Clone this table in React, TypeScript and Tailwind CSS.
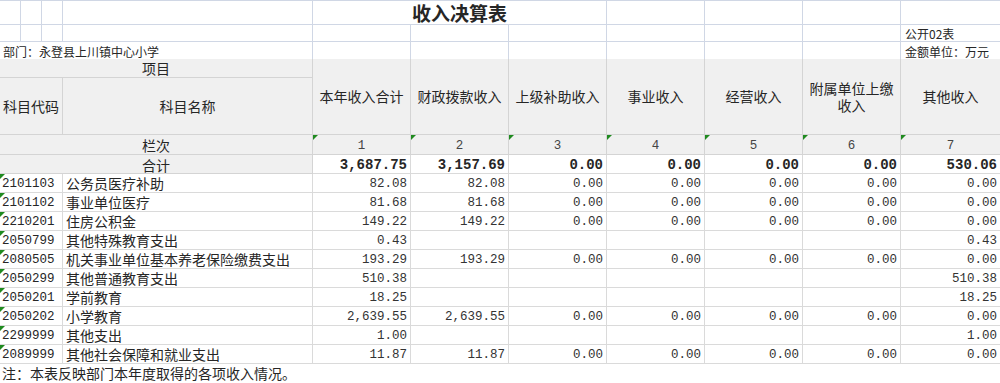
const CJK = "font-['Noto_Sans_CJK_SC',sans-serif]";
const MONO = "font-['Liberation_Mono',monospace]";

const HEAD_COLS = ['本年收入合计', '财政拨款收入', '上级补助收入', '事业收入', '经营收入', '附属单位上缴收入', '其他收入'];

const TOTALS = ['3,687.75', '3,157.69', '0.00', '0.00', '0.00', '0.00', '530.06'];

const ZERO5 = ['0.00', '0.00', '0.00', '0.00', '0.00'];

const ROWS: [string, string, string[]][] = [
  ['2101103', '公务员医疗补助', ['82.08', '82.08', ...ZERO5]],
  ['2101102', '事业单位医疗', ['81.68', '81.68', ...ZERO5]],
  ['2210201', '住房公积金', ['149.22', '149.22', ...ZERO5]],
  ['2050799', '其他特殊教育支出', ['0.43', '', '', '', '', '', '0.43']],
  ['2080505', '机关事业单位基本养老保险缴费支出', ['193.29', '193.29', ...ZERO5]],
  ['2050299', '其他普通教育支出', ['510.38', '', '', '', '', '', '510.38']],
  ['2050201', '学前教育', ['18.25', '', '', '', '', '', '18.25']],
  ['2050202', '小学教育', ['2,639.55', '2,639.55', ...ZERO5]],
  ['2299999', '其他支出', ['1.00', '', '', '', '', '', '1.00']],
  ['2089999', '其他社会保障和就业支出', ['11.87', '11.87', ...ZERO5]],
];

// little green "number stored as text" marker
const Flag = () => (
  <span className="absolute left-0 top-0 h-0 w-0 border-r-[5px] border-t-[5px] border-r-transparent border-t-[#1f8a1f]" />
);

const TOP = 'border-b border-r border-[#d0d7e5]';
const TOP_LAST = 'border-b border-[#d0d7e5]';
const HEAD = 'flex items-center justify-center bg-[#f0f0f0] border-b border-r border-[#d4d4d4] text-center';
const CELL = 'flex items-center justify-end pr-[3px] pt-[2px] border-b border-r border-[#dadada]';
const CELL_LAST = 'flex items-center justify-end pr-[3px] pt-[2px] border-b border-[#dadada]';

export default function App() {
  return (
    <div className={`h-[383px] w-[1000px] overflow-hidden bg-white text-[#262626] ${CJK}`}>
      <div className="grid grid-cols-[21px_21px_21px_250px_98px_98px_98px_98px_98px_98px_99px] grid-rows-[25px_17px_17px_19px_57px_20px_19px_19px_19px_19px_19px_19px_19px_19px_19px_19px_19px]">
        {/* row 1: title */}
        <div className={`${TOP} border-t`} />
        <div className={`${TOP} border-t`} />
        <div className={`${TOP} border-t`} />
        <div className={`${TOP} border-t`} />
        <div className={`${TOP} col-span-3 flex items-center justify-center border-t text-[19px] font-bold leading-none`}>
          收入决算表
        </div>
        <div className={`${TOP} border-t`} />
        <div className={`${TOP} border-t`} />
        <div className={`${TOP} border-t`} />
        <div className={`${TOP_LAST} border-t`} />

        {/* row 2 */}
        <div className={TOP} />
        <div className={TOP} />
        <div className={TOP} />
        <div className={TOP} />
        <div className={TOP} />
        <div className={TOP} />
        <div className={TOP} />
        <div className={TOP} />
        <div className={TOP} />
        <div className={TOP} />
        <div className={`${TOP_LAST} flex items-end pl-[4px] text-[12px] leading-[15px]`}>公开02表</div>

        {/* row 3 */}
        <div className="col-span-4 flex items-end border-r border-[#d0d7e5] pl-[3px] text-[12px] leading-[15px]">
          部门：永登县上川镇中心小学
        </div>
        <div className="border-r border-[#d0d7e5]" />
        <div className="border-r border-[#d0d7e5]" />
        <div className="border-r border-[#d0d7e5]" />
        <div className="border-r border-[#d0d7e5]" />
        <div className="border-r border-[#d0d7e5]" />
        <div className="border-r border-[#d0d7e5]" />
        <div className="flex items-end pl-[4px] text-[12px] leading-[15px]">金额单位：万元</div>

        {/* header */}
        <div className={`${HEAD} col-span-4 text-[14px]`}>项目</div>
        {HEAD_COLS.map((label, i) => (
          <div
            key={label}
            className={
              i === 6
                ? 'row-span-2 flex items-center justify-center bg-[#f0f0f0] border-b border-[#d4d4d4] px-1 text-center text-[14px]'
                : 'row-span-2 flex items-center justify-center bg-[#f0f0f0] border-b border-r border-[#d4d4d4] px-1 text-center text-[14px]'
            }
          >
            {label === '附属单位上缴收入' ? (
              <div className="flex flex-col items-center leading-[17px]">
                <span>附属单位上缴</span>
                <span>收入</span>
              </div>
            ) : (
              label
            )}
          </div>
        ))}
        <div className={`${HEAD} col-span-3 text-[14px]`}>科目代码</div>
        <div className={`${HEAD} text-[14px]`}>科目名称</div>

        {/* 栏次 */}
        <div className={`${HEAD} col-span-4 pt-[2px] text-[14px]`}>栏次</div>
        {[1, 2, 3, 4, 5, 6, 7].map((n) => (
          <div
            key={n}
            className={`${n === 7 ? 'border-b border-[#d4d4d4]' : 'border-b border-r border-[#d4d4d4]'} relative flex items-center justify-center bg-[#f0f0f0] pt-[3px] text-[12.5px] text-[#444] ${MONO}`}
          >
            <Flag />
            {n}
          </div>
        ))}

        {/* 合计 */}
        <div className={`${HEAD} col-span-4 pt-[2px] text-[14px]`}>合计</div>
        {TOTALS.map((v, i) => (
          <div key={i} className={`${i === 6 ? CELL_LAST : CELL} text-[14px] font-bold ${MONO}`}>
            {v}
          </div>
        ))}

        {/* data rows */}
        {ROWS.map(([code, name, vals]) => (
          <div key={code} className="contents">
            <div className={`relative col-span-3 flex items-center border-b border-r border-[#dadada] pl-[2px] pt-[2px] text-[12.5px] ${MONO}`}>
              <Flag />
              {code}
            </div>
            <div className="flex items-center border-b border-r border-[#dadada] pl-[3px] pt-[1px] text-[14px] whitespace-nowrap">
              {name}
            </div>
            {vals.map((v, i) => (
              <div key={i} className={`${i === 6 ? CELL_LAST : CELL} text-[12.5px] text-[#333] ${MONO}`}>
                {v}
              </div>
            ))}
          </div>
        ))}
      </div>

      <div className="flex h-[19px] items-center pl-[2px] text-[14px]">注：本表反映部门本年度取得的各项收入情况。</div>
    </div>
  );
}
